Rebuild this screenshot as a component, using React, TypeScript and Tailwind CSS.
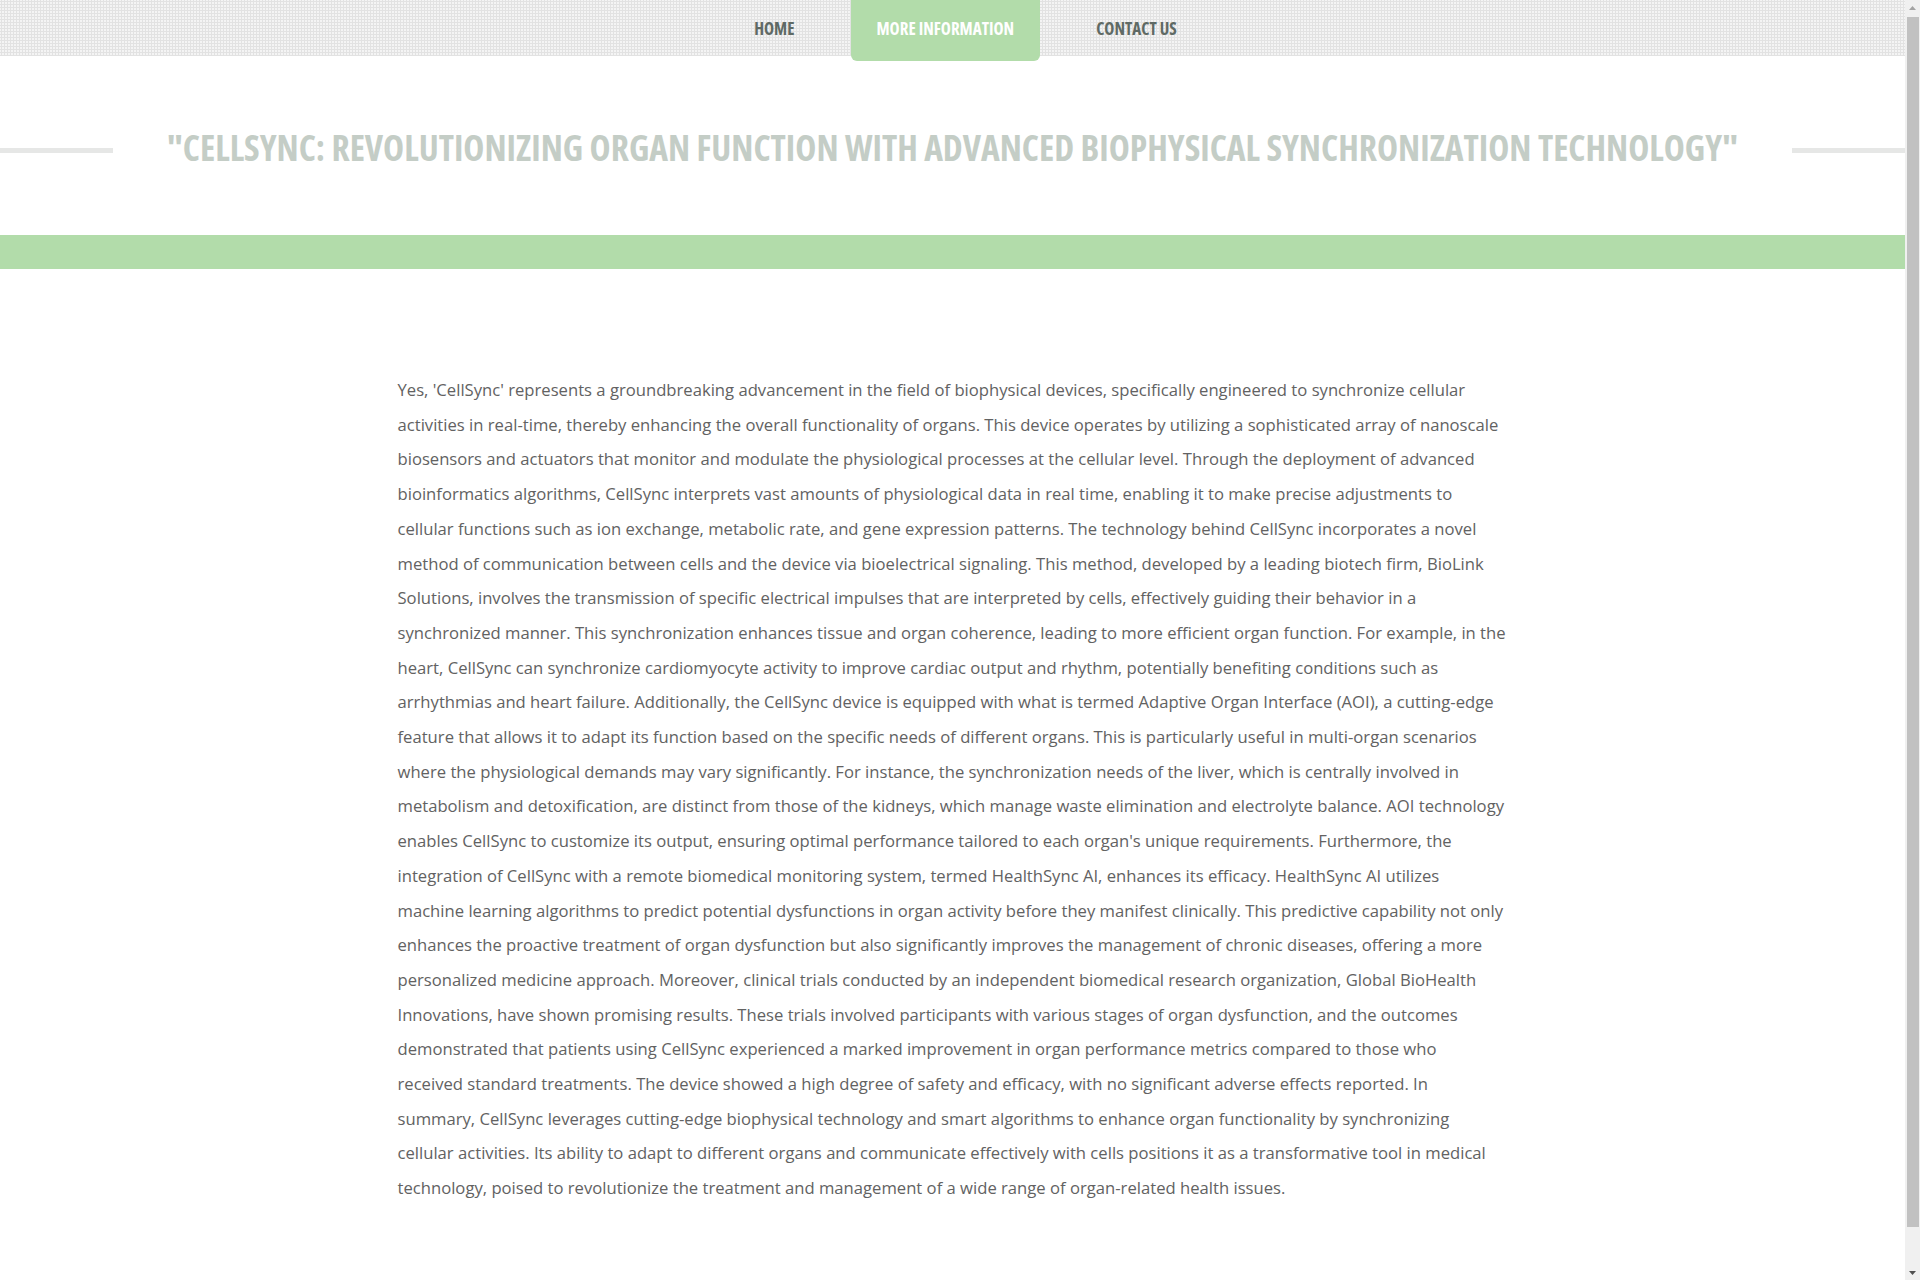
import React from "react";

const bodyA =
  "Yes, 'CellSync' represents a groundbreaking advancement in the field of biophysical devices, specifically engineered to synchronize cellular activities in real-time, thereby enhancing the overall functionality of organs. This device operates by utilizing a sophisticated array of nanoscale biosensors and actuators that monitor and modulate the physiological processes at the cellular level. Through the deployment of advanced bioinformatics algorithms, CellSync interprets vast amounts of physiological data in real time, enabling it to make precise adjustments to cellular functions such as ion exchange, metabolic rate, and gene expression patterns. The technology behind CellSync incorporates a novel method of communication between cells and the device via bioelectrical signaling. This method, developed by a leading biotech firm, BioLink Solutions, involves the transmission of specific electrical impulses that are interpreted by cells, effectively guiding their behavior in a synchronized manner. This synchronization enhances tissue and organ coherence, leading to more efficient organ function. For example, in the heart, CellSync can synchronize cardiomyocyte activity to improve cardiac output and rhythm, potentially benefiting conditions such as arrhythmias and heart failure. Additionally, the CellSync device is equipped with what is termed Adaptive Organ Interface (AOI), a cutting-edge feature that allows it to adapt its function based on the specific needs of different organs. This is particularly useful in multi-organ scenarios where the physiological demands may vary significantly. For instance, the synchronization needs of the liver, which is centrally involved in metabolism and detoxification, are distinct from those of the kidneys, which manage waste elimination and electrolyte balance. AOI technology enables CellSync to customize its output, ensuring optimal performance tailored to each organ's unique requirements. Furthermore, the integration of CellSync with a remote biomedical monitoring system, termed HealthSync AI, enhances its efficacy. HealthSync AI utilizes machine learning algorithms to predict potential dysfunctions in organ activity before they manifest clinically. This predictive capability not only enhances the proactive treatment of organ dysfunction but also significantly improves the management of chronic diseases, offering a more personalized medicine approach. Moreover, clinical trials conducted by an independent biomedical research organization, Global BioHealth Innovations, have shown promising results. These trials involved participants with various stages of organ dysfunction, and the outcomes demonstrated that patients using CellSync experienced a marked improvement in organ performance metrics compared to those who";
const bodyB =
  "received standard treatments. The device showed a high degree of safety and efficacy, with no significant adverse effects reported. In summary, CellSync leverages cutting-edge biophysical technology and smart algorithms to enhance organ functionality by synchronizing cellular activities. Its ability to adapt to different organs and communicate effectively with cells positions it as a transformative tool in medical technology, poised to revolutionize the treatment and management of a wide range of organ-related health issues.";

function Scrollbar() {
  return (
    <div className="fixed right-0 top-0 z-20 flex h-screen w-[15px] flex-col bg-[#f0f0f0]">
      <div className="flex h-[15px] items-center justify-center">
        <svg width="7" height="4" viewBox="0 0 7 4">
          <path d="M0 4 L3.5 0 L7 4 Z" fill="#a3a3a3" />
        </svg>
      </div>
      <div className="mx-auto mt-[2px] h-[1210px] w-[12px] bg-[#c1c1c1]" />
      <div className="flex-1" />
      <div className="flex h-[15px] items-center justify-center">
        <svg width="7" height="4" viewBox="0 0 7 4">
          <path d="M0 0 L7 0 L3.5 4 Z" fill="#505050" />
        </svg>
      </div>
    </div>
  );
}

export default function App() {
  const cond = "font-['Open_Sans',sans-serif] font-bold [font-stretch:75%] uppercase";
  return (
    <div className="min-h-screen bg-white font-['Open_Sans',sans-serif]">
      <div className="mr-[15px]">
        <nav className="relative z-10 h-[56px] bg-[#f4f4f4] bg-[radial-gradient(#e2e2e2_1px,transparent_1.2px)] bg-[size:3px_3px]">
          <ul className="flex justify-center pl-[26px]">
            <li className="mx-[15px]">
              <a className={`${cond} block h-[56px] px-[26px] text-[17px] leading-[58px] text-[#5f6a65]`}>Home</a>
            </li>
            <li className="mx-[15px]">
              <a className={`${cond} block h-[61px] rounded-b-[6px] bg-[#b2dcaa] px-[26px] text-[17px] leading-[58px] text-white`}>
                More Information
              </a>
            </li>
            <li className="mx-[15px]">
              <a className={`${cond} block h-[56px] px-[26px] text-[17px] leading-[58px] text-[#5f6a65]`}>Contact Us</a>
            </li>
          </ul>
        </nav>

        <section className="flex items-center pt-[67px] pb-[58px]">
          <div className="h-[5px] flex-1 bg-[#e6e7e6]" />
          <h1 className={`${cond} whitespace-nowrap px-[54px] pb-[6px] text-[35.6px] leading-[48px] text-[#c4cdc6]`}>
            "CellSync: Revolutionizing Organ Function with Advanced Biophysical Synchronization Technology"
          </h1>
          <div className="h-[5px] flex-1 bg-[#e6e7e6]" />
        </section>

        <div className="h-[34px] bg-[#b2dcaa]" />

        <main className="mx-auto w-[1110px] pt-[104px] pb-[112px]">
          <p className="text-[16.65px] leading-[34.7px] text-[#626262]">
            {bodyA}
            <br />
            {bodyB}
          </p>
        </main>
      </div>
      <Scrollbar />
    </div>
  );
}
